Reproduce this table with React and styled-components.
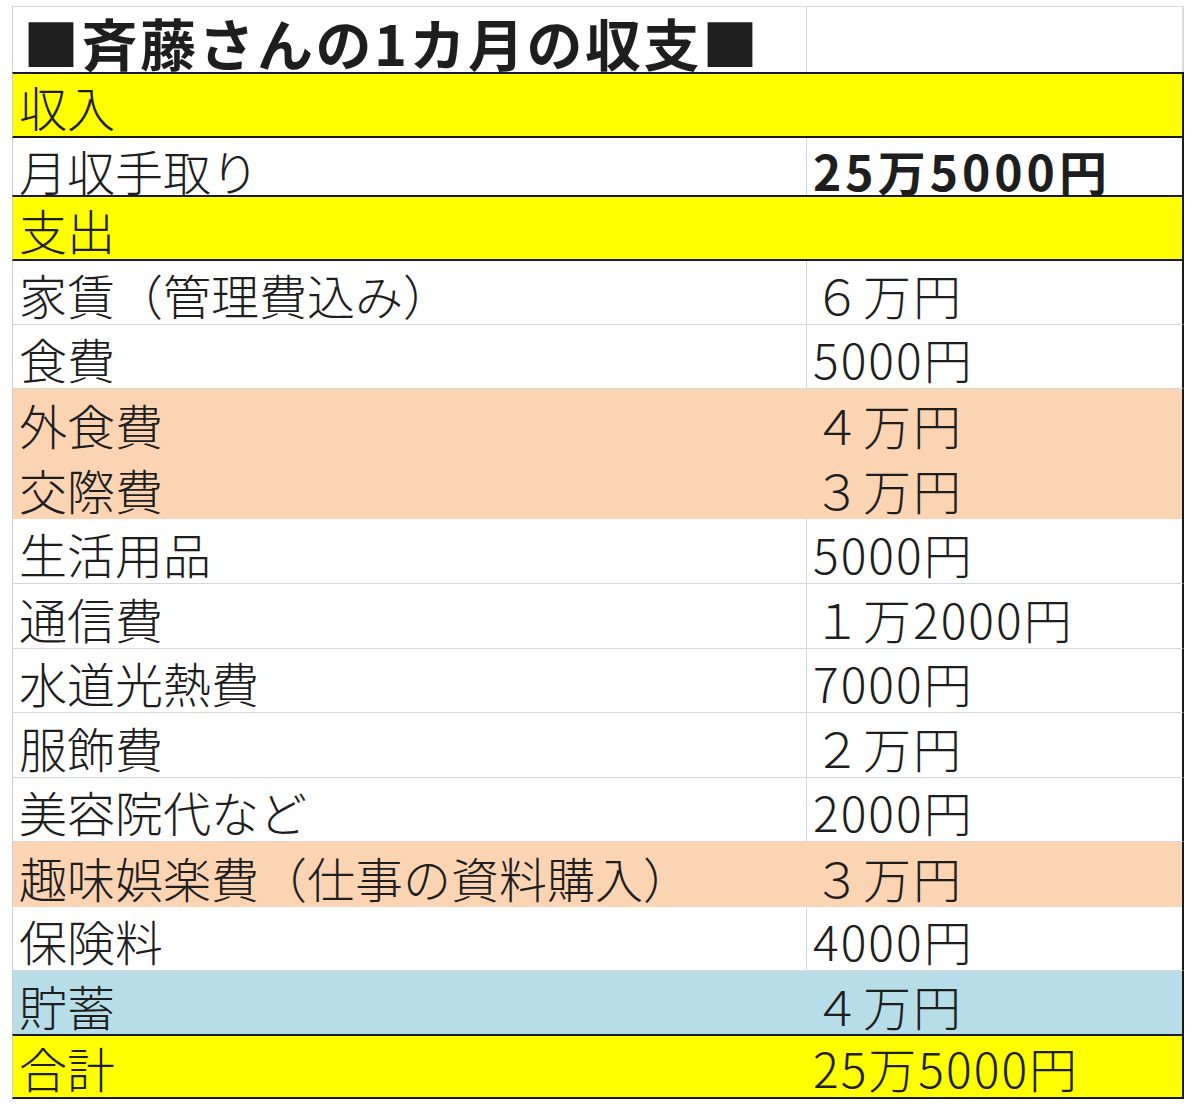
import React from "react";
import styled, { createGlobalStyle } from "styled-components";

const GlobalStyle = createGlobalStyle`
  body {
    margin: 0;
    background: #fff;
    font-family: "Noto Sans CJK JP", "Noto Sans", sans-serif;
    color: #1e1e1e;
  }
`;

const fills = {
  title: "#ffffff",
  yellow: "#ffff00",
  white: "#ffffff",
  peach: "#fbd4b4",
  blue: "#b7dde8",
};

const rows = [
  { kind: "yellow", label: "収入", value: "", h: 66 },
  { kind: "white", label: "月収手取り", value: "25万5000円", h: 58, bold: true, pad: 1 },
  { kind: "yellow", label: "支出", value: "", h: 66 },
  { kind: "white", label: "家賃（管理費込み）", value: "６万円", h: 64 },
  { kind: "white", label: "食費", value: "5000円", h: 64 },
  { kind: "peach", label: "外食費", value: "４万円", h: 65 },
  { kind: "peach", label: "交際費", value: "３万円", h: 65 },
  { kind: "white", label: "生活用品", value: "5000円", h: 65 },
  { kind: "white", label: "通信費", value: "１万2000円", h: 65 },
  { kind: "white", label: "水道光熱費", value: "7000円", h: 64 },
  { kind: "white", label: "服飾費", value: "２万円", h: 65 },
  { kind: "white", label: "美容院代など", value: "2000円", h: 64 },
  { kind: "peach", label: "趣味娯楽費（仕事の資料購入）", value: "３万円", h: 65 },
  { kind: "white", label: "保険料", value: "4000円", h: 64 },
  { kind: "blue", label: "貯蓄", value: "４万円", h: 64 },
  { kind: "yellow", label: "合計", value: "25万5000円", h: 65 },
];

function Budget() {
  return (
    <Sheet>
      <Row kind="title" h={66}>
        <Cell kind="title" pad={2}>
          <TitleText>■斉藤さんの1カ月の収支■</TitleText>
        </Cell>
        <Cell kind="title" last />
      </Row>
      {rows.map((r, i) => (
        <Row key={i} kind={r.kind} h={r.h}>
          <Cell kind={r.kind} pad={r.pad}>
            <CellText>{r.label}</CellText>
          </Cell>
          <Cell kind={r.kind} pad={r.pad} last>
            <ValueText bold={r.bold}>{r.value}</ValueText>
          </Cell>
        </Row>
      ))}
    </Sheet>
  );
}

export default function App() {
  return (
    <>
      <GlobalStyle />
      <Page>
        <Budget />
      </Page>
    </>
  );
}

const Page = styled.div`
  padding: 6px 0 0 12px;
`;

const Sheet = styled.div`
  width: 1172px;
  display: flex;
  flex-direction: column;
  border-top: 1px solid #d9d9df;
`;

const Row = styled.div`
  display: grid;
  grid-template-columns: 794px 1fr;
  height: ${(p) => p.h}px;
  box-sizing: border-box;
  background: ${(p) => fills[p.kind]};
  border-left: 1px solid #cfcfd6;
  border-right: 2px solid ${(p) => (p.kind === "title" ? "#d9d9df" : "#1a1a1a")};
  border-bottom: ${(p) =>
    p.kind === "yellow"
      ? "2px solid #1a1a1a"
      : p.kind === "white" || p.kind === "title"
      ? "1px solid #d6d6de"
      : "none"};
  border-top: ${(p) => (p.kind === "yellow" ? "2px solid #1a1a1a" : "none")};
  margin-top: ${(p) => (p.kind === "yellow" ? "-1px" : "0")};
  overflow: hidden;
`;

const Cell = styled.div`
  display: flex;
  align-items: flex-end;
  padding: 0 0 ${(p) => (p.pad ?? 6)}px 6px;
  border-right: ${(p) =>
    !p.last && (p.kind === "white" || p.kind === "title") ? "1px solid #d6d6de" : "none"};
  overflow: hidden;
  white-space: nowrap;
`;

const CellText = styled.span`
  font-size: 48px;
  line-height: 1;
  font-weight: 300;
`;

const ValueText = styled.span`
  font-size: 48px;
  line-height: 1;
  font-weight: ${(p) => (p.bold ? 700 : 300)};
  letter-spacing: ${(p) => (p.bold ? "4px" : "2px")};
`;

const TitleText = styled.span`
  font-size: 56px;
  line-height: 1;
  font-weight: 700;
  margin-left: 4px;
  letter-spacing: 2.5px;
`;
